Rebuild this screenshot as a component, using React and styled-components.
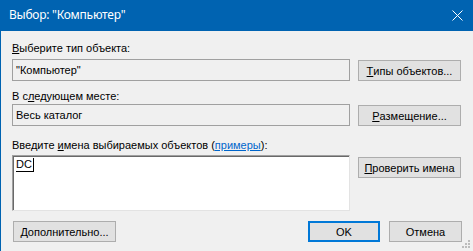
import styled, { createGlobalStyle } from "styled-components";

const GlobalStyle = createGlobalStyle`
  html, body {
    margin: 0;
    padding: 0;
    background: #f0f0f0;
  }
  * {
    box-sizing: border-box;
  }
`;

const Window = styled.div`
  width: 473px;
  height: 251px;
  display: flex;
  flex-direction: column;
  background: #f0f0f0;
  border-left: 1px solid #0063b1;
  position: relative;
  font-family: "Liberation Sans", Arial, sans-serif;
  font-size: 11px;
  color: #000;
  overflow: hidden;
`;

const TitleBar = styled.div`
  height: 31px;
  flex: none;
  display: flex;
  align-items: center;
  justify-content: space-between;
  background: #0063b1;
  color: #fff;
  padding: 0 10px 0 9px;
  margin-left: -1px;
  font-family: "Noto Sans", "Liberation Sans", sans-serif;
  font-size: 12px;
`;

const Title = styled.span`
  line-height: 16px;
  margin-top: -1px;
  letter-spacing: -0.25px;
`;

const Body = styled.div`
  display: flex;
  flex-direction: column;
  padding: 0 11px 0 11px;
`;

const Label = styled.div`
  height: 14px;
  line-height: 14px;
  margin-top: ${(p) => p.$top}px;
  white-space: nowrap;
`;

const Key = styled.span`
  text-decoration: underline;
  text-underline-offset: 1px;
`;

const Link = styled.span`
  color: #0066cc;
  text-decoration: underline;
  text-underline-offset: 1px;
`;

const Row = styled.div`
  display: grid;
  grid-template-columns: 338px 103px;
  column-gap: 8px;
  align-items: start;
  margin-top: ${(p) => p.$top}px;
`;

const Field = styled.div`
  height: 22px;
  border: 1px solid #a0a0a0;
  background: #f0f0f0;
  display: flex;
  align-items: center;
  padding: 0 3px;
  white-space: nowrap;
`;

const Area = styled.div`
  height: 56px;
  background: #fff;
  border-top: 1px solid #a0a0a0;
  border-left: 1px solid #a0a0a0;
  border-right: 1px solid #e3e3e3;
  border-bottom: 1px solid #e3e3e3;
  box-shadow: inset 1px 1px 0 #696969;
  padding: 2px 3px;
`;

const Entry = styled.span`
  display: inline-block;
  line-height: 13px;
  border-bottom: 1px solid #000;
  border-right: 1px solid #000;
  padding-right: 1px;
`;

const Button = styled.div`
  height: 21px;
  width: ${(p) => p.$w || 103}px;
  margin-top: ${(p) => p.$top || 0}px;
  display: flex;
  align-items: center;
  justify-content: center;
  background: #e1e1e1;
  border: ${(p) => (p.$default ? "2px solid #0078d7" : "1px solid #adadad")};
  white-space: nowrap;
`;

const Footer = styled.div`
  display: flex;
  align-items: center;
  margin-top: 10px;
  padding-left: 1px;
  gap: 9px;
`;

const Spacer = styled.div`
  flex: 1;
`;

const Grip = styled.svg`
  position: absolute;
  right: 2px;
  bottom: 2px;
`;

export default function App() {
  return (
    <>
      <GlobalStyle />
      <Window>
        <TitleBar>
          <Title>Выбор: "Компьютер"</Title>
          <svg width="11" height="11" viewBox="0 0 11 11">
            <path d="M0.5 0.5 L10.5 10.5 M10.5 0.5 L0.5 10.5" stroke="#fff" strokeWidth="1" />
          </svg>
        </TitleBar>
        <Body>
          <Label $top={10}>
            <Key>В</Key>ыберите тип объекта:
          </Label>
          <Row $top={4}>
            <Field>"Компьютер"</Field>
            <Button $top={1}>
              <Key>Т</Key>ипы объектов...
            </Button>
          </Row>
          <Label $top={8}>
            В с<Key>л</Key>едующем месте:
          </Label>
          <Row $top={1}>
            <Field>Весь каталог</Field>
            <Button $top={1}>
              <Key>Р</Key>азмещение...
            </Button>
          </Row>
          <Label $top={12}>
            Введите <Key>и</Key>мена выбираемых объектов (<Link>примеры</Link>):
          </Label>
          <Row $top={3}>
            <Area>
              <Entry>DC</Entry>
            </Area>
            <Button $top={2}>
              <Key>П</Key>роверить имена
            </Button>
          </Row>
          <Footer>
            <Button $w={103}>
              <Key>Д</Key>ополнительно...
            </Button>
            <Spacer />
            <Button $w={72} $default>
              OK
            </Button>
            <Button $w={73}>Отмена</Button>
          </Footer>
        </Body>
        <Grip width="10" height="10" viewBox="0 0 10 10">
          {[
            [8, 2],
            [8, 5],
            [5, 5],
            [8, 8],
            [5, 8],
            [2, 8],
          ].map(([x, y]) => (
            <rect key={`${x}-${y}`} x={x - 1} y={y - 1} width="2" height="2" fill="#bcbcbc" />
          ))}
        </Grip>
      </Window>
    </>
  );
}
